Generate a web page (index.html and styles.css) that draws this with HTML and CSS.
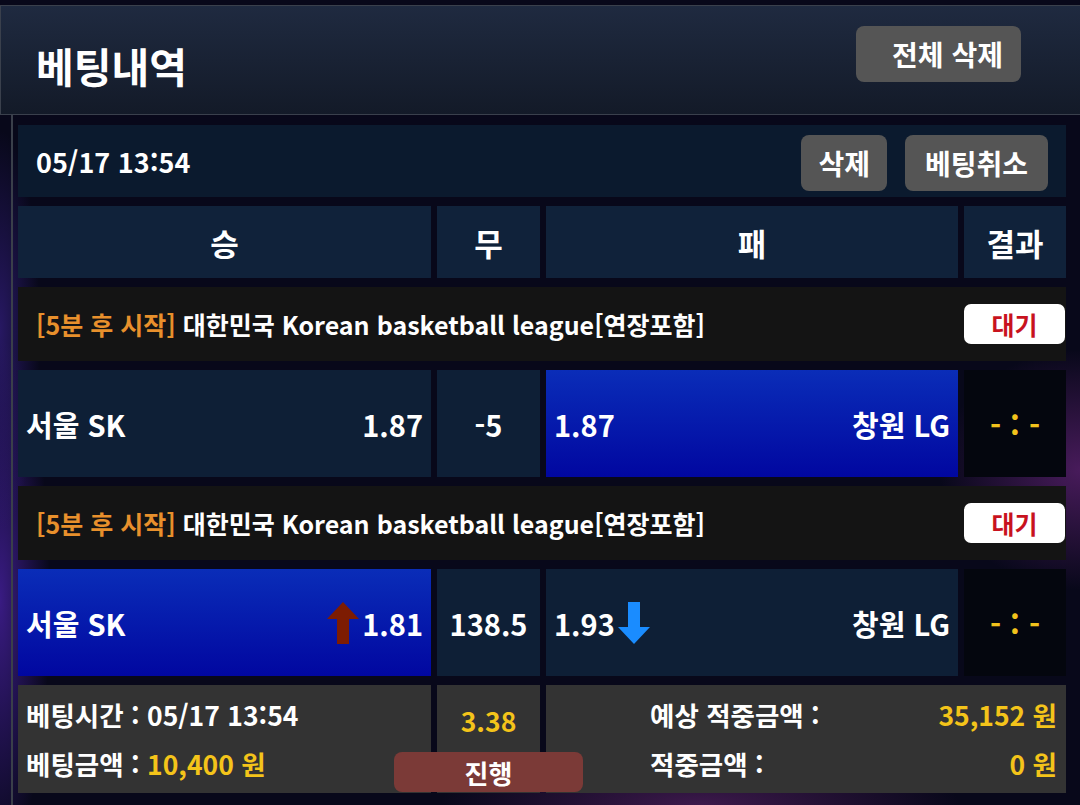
FILE: index.html
```html
<!DOCTYPE html>
<html lang="ko">
<head>
  <meta charset="UTF-8" />
  <meta name="viewport" content="width=device-width, initial-scale=1.0"/>
  <title>베팅내역</title>
  <link rel="stylesheet" href="styles.css">
</head>
<body>

<header class="top">
  <h1>베팅내역</h1>
  <button class="btn btn-all">전체 삭제</button>
</header>

<div class="panel">
  <div class="slip-head">
    <span class="slip-date">05/17 13:54</span>
    <div class="actions">
      <button class="btn btn-del">삭제</button>
      <button class="btn btn-cancel">베팅취소</button>
    </div>
  </div>

  <div class="row cols">
    <div class="cell">승</div>
    <div class="cell">무</div>
    <div class="cell">패</div>
    <div class="cell">결과</div>
  </div>

  <div class="match">
    <p><span class="start">[5분 후 시작]</span> 대한민국 Korean basketball league[연장포함]</p>
    <span class="badge">대기</span>
  </div>
  <div class="row odds">
    <div class="cell"><span>서울 SK</span><span>1.87</span></div>
    <div class="cell line">-5</div>
    <div class="cell picked"><span>1.87</span><span>창원 LG</span></div>
    <div class="cell result"><span>-</span><span class="colon">:</span><span>-</span></div>
  </div>

  <div class="match">
    <p><span class="start">[5분 후 시작]</span> 대한민국 Korean basketball league[연장포함]</p>
    <span class="badge">대기</span>
  </div>
  <div class="row odds">
    <div class="cell picked">
      <span>서울 SK</span>
      <span class="rate">
        <svg class="arrow" width="32" height="42" viewBox="0 0 32 42"><polygon points="16,0 32,17 22,17 22,42 10,42 10,17 0,17" fill="#7d1c02"/></svg>1.81
      </span>
    </div>
    <div class="cell line">138.5</div>
    <div class="cell">
      <span class="rate">1.93<svg class="arrow" width="32" height="42" viewBox="0 0 32 42"><polygon points="16,42 32,25 22,25 22,0 10,0 10,25 0,25" fill="#1a8cff"/></svg></span>
      <span>창원 LG</span>
    </div>
    <div class="cell result"><span>-</span><span class="colon">:</span><span>-</span></div>
  </div>

  <div class="row summary">
    <div class="cell info">
      <p>베팅시간 : 05/17 13:54</p>
      <p>베팅금액 : <span class="gold">10,400 원</span></p>
    </div>
    <div class="cell total"><span class="gold">3.38</span></div>
    <div class="cell payout">
      <p><span>예상 적중금액 :</span><span class="gold">35,152 원</span></p>
      <p><span>적중금액 :</span><span class="gold">0 원</span></p>
    </div>
    <span class="state">진행</span>
  </div>
</div>

</body>
</html>
```

FILE: styles.css
```css
body {
  margin: 0;
  width: 1080px;
  height: 805px;
  overflow: hidden;
  color: #fff;
  font-family: "Noto Sans CJK KR", "Noto Sans", sans-serif;
  background:
    radial-gradient(ellipse 40px 200px at 0 330px, rgba(70, 40, 170, 0.5), transparent),
    radial-gradient(ellipse 50px 260px at 0 600px, rgba(90, 40, 200, 0.6), transparent),
    radial-gradient(ellipse 140px 120px at 1080px 470px, rgba(150, 50, 170, 0.45), transparent),
    radial-gradient(ellipse 260px 60px at 700px 805px, rgba(140, 50, 150, 0.4), transparent),
    #08081a;
}
p {
  margin: 0;
}
button {
  font-family: inherit;
  border: 0;
  cursor: pointer;
}
.top {
  margin-top: 5px;
  height: 110px;
  box-sizing: border-box;
  border: 1px solid #3a404c;
  border-right: 0;
  background: linear-gradient(#1f2a40, #131a28);
  display: flex;
  align-items: center;
  justify-content: space-between;
  padding: 0 59px 0 35px;
}
.top h1 {
  margin: 10px 0 0;
  font-size: 41px;
  font-weight: 700;
}
.btn {
  background: #555;
  color: #fff;
  border-radius: 8px;
  height: 56px;
  font-size: 28px;
  font-weight: 700;
  padding: 0 20px;
}
.btn-all {
  padding: 0 18px 0 36px;
  margin-bottom: 12px;
}
.btn-del {
  padding: 0 17px;
}
.panel {
  margin-left: 11px;
  border-left: 2px solid #3a3f4a;
  padding: 10px 0 20px 5px;
  width: 1048px;
  display: flex;
  flex-direction: column;
  gap: 9px;
}
.slip-head {
  height: 72px;
  background: #0b1a2e;
  display: flex;
  align-items: center;
  justify-content: space-between;
  padding: 0 18px;
}
.slip-date {
  font-size: 27px;
  font-weight: 700;
}
.actions {
  display: flex;
  gap: 18px;
  margin-top: 4px;
}
.row {
  display: grid;
  grid-template-columns: 413px 103px 412px 1fr;
  gap: 6px;
}
.cell {
  display: flex;
  align-items: center;
  font-size: 29px;
  font-weight: 700;
}
.cols .cell {
  height: 72px;
  justify-content: center;
  background: #10223a;
  font-size: 31px;
}
.match {
  height: 74px;
  background: #141414;
  display: flex;
  align-items: center;
  justify-content: space-between;
  padding-left: 18px;
  font-size: 25px;
  font-weight: 700;
}
.start {
  color: #e8902c;
}
.badge {
  width: 101px;
  height: 40px;
  margin-right: 1px;
  background: #fff;
  border-radius: 7px;
  color: #c8121e;
  font-size: 25px;
  display: flex;
  align-items: center;
  justify-content: center;
}
.odds .cell {
  height: 107px;
  background: #0e1f36;
  justify-content: space-between;
  padding: 0 8px;
}
.odds .cell.picked {
  background: linear-gradient(#0a2db8, #0107a0);
}
.odds .cell.line {
  justify-content: center;
}
.odds .cell.result {
  background: #04060e;
  justify-content: center;
  color: #f2c21c;
  font-size: 30px;
  gap: 9px;
}
.rate {
  display: flex;
  align-items: center;
  gap: 3px;
}
.arrow {
  display: block;
}
.summary {
  position: relative;
}
.summary .cell {
  height: 108px;
  background: #333;
  font-size: 26.5px;
}
.info {
  flex-direction: column;
  align-items: flex-start !important;
  justify-content: center;
  gap: 10px;
  padding-left: 8px;
}
.total {
  justify-content: center;
  padding-bottom: 38px;
  box-sizing: border-box;
}
.payout {
  grid-column: 3 / 5;
  flex-direction: column;
  align-items: stretch !important;
  justify-content: center;
  gap: 10px;
  padding: 0 9px 0 104px;
}
.payout p {
  display: flex;
  justify-content: space-between;
}
.gold {
  color: #f4c41a;
}
.state {
  position: absolute;
  left: 376px;
  top: 67px;
  width: 189px;
  height: 40px;
  background: #7b3a37;
  border-radius: 8px;
  display: flex;
  align-items: center;
  justify-content: center;
  font-size: 26px;
  font-weight: 700;
}
```
